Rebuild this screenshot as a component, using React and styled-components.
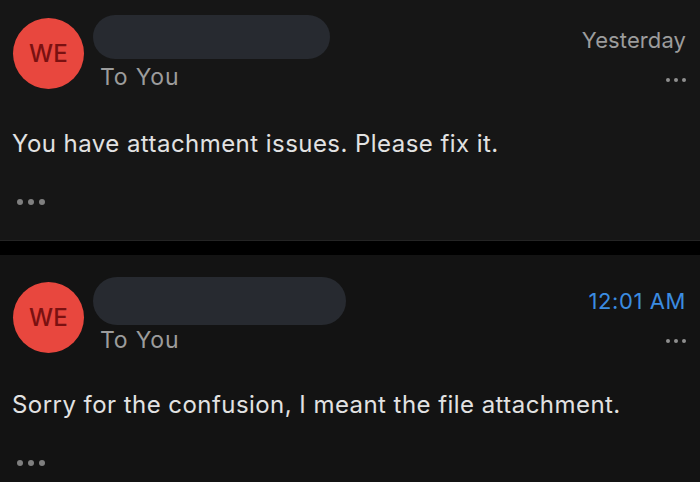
import React from "react";
import styled, { createGlobalStyle } from "styled-components";

const Global = createGlobalStyle`
  html, body { margin: 0; padding: 0; background: #121212; }
  body { font-family: Inter, "Noto Sans", Arial, sans-serif; -webkit-font-smoothing: antialiased; }
  #root { width: 700px; height: 482px; overflow: hidden; }
`;

const Page = styled.div`
  display: flex;
  flex-direction: column;
  width: 700px;
  height: 482px;
`;

const Card = styled.section`
  background: ${(p) => p.$bg};
  height: ${(p) => p.$height}px;
  padding: 0 14px 0 13px;
  box-sizing: border-box;
  display: flex;
  flex-direction: column;
  flex-shrink: 0;
`;

const Separator = styled.div`
  height: 15px;
  background: #000;
  border-top: 1px solid #242424;
  box-sizing: border-box;
  flex-shrink: 0;
`;

const Header = styled.div`
  display: flex;
  align-items: flex-start;
`;

const Avatar = styled.div`
  width: 71px;
  height: 71px;
  margin-top: ${(p) => p.$mt}px;
  border-radius: 50%;
  background: #e8473e;
  color: #7a1111;
  display: flex;
  align-items: center;
  justify-content: center;
  font-size: 24px;
  font-weight: 500;
  letter-spacing: 0.3px;
  flex-shrink: 0;
`;

const Meta = styled.div`
  margin-left: 9px;
  padding-top: ${(p) => p.$pt}px;
  display: flex;
  flex-direction: column;
`;

const NamePill = styled.div`
  width: ${(p) => p.$w}px;
  height: ${(p) => p.$h}px;
  border-radius: ${(p) => p.$h / 2}px;
  background: #272a30;
`;

const Recipient = styled.div`
  margin-top: ${(p) => p.$mt}px;
  margin-left: 7px;
  font-size: 23px;
  line-height: 28px;
  letter-spacing: 0.8px;
  color: #9c9c9c;
`;

const Side = styled.div`
  margin-left: auto;
  padding-top: ${(p) => p.$pt}px;
  display: flex;
  flex-direction: column;
  align-items: flex-end;
`;

const Time = styled.div`
  font-size: 22px;
  line-height: 26px;
  letter-spacing: ${(p) => (p.$accent ? "0.6px" : "0.1px")};
  color: ${(p) => (p.$accent ? "#3b8ce0" : "#9c9c9c")};
  white-space: nowrap;
`;

const Dots = styled.div`
  display: flex;
  gap: ${(p) => p.$gap}px;
  margin-top: ${(p) => p.$mt}px;
  margin-left: ${(p) => p.$ml || 0}px;
  span {
    width: ${(p) => p.$size}px;
    height: ${(p) => p.$size}px;
    border-radius: 50%;
    background: ${(p) => p.$color};
  }
`;

const Message = styled.p`
  margin: ${(p) => p.$mt}px 0 0 -1px;
  font-size: 24px;
  line-height: 30px;
  letter-spacing: 0.45px;
  color: #e2e2e2;
  white-space: nowrap;
`;

const DotRow = ({ size, gap, color, mt, ml }) => (
  <Dots $size={size} $gap={gap} $color={color} $mt={mt} $ml={ml}>
    <span />
    <span />
    <span />
  </Dots>
);

const Email = ({ bg, height, avatarTop, pillTop, pillW, pillH, toTop, sideTop, time, accent, text, msgTop, dotsTop }) => (
  <Card $bg={bg} $height={height}>
    <Header>
      <Avatar $mt={avatarTop}>WE</Avatar>
      <Meta $pt={pillTop}>
        <NamePill $w={pillW} $h={pillH} />
        <Recipient $mt={toTop}>To You</Recipient>
      </Meta>
      <Side $pt={sideTop}>
        <Time $accent={accent}>{time}</Time>
        <DotRow size={4} gap={4} color="#8f8f8f" mt={25} />
      </Side>
    </Header>
    <Message $mt={msgTop}>{text}</Message>
    <DotRow size={6} gap={5} color="#7f7f7f" mt={dotsTop} ml={4} />
  </Card>
);

export default function App() {
  return (
    <>
      <Global />
      <Page>
        <Email
          bg="#161616"
          height={240}
          avatarTop={18}
          pillTop={15}
          pillW={237}
          pillH={44}
          toTop={4}
          sideTop={27}
          time="Yesterday"
          text="You have attachment issues. Please fix it."
          msgTop={38}
          dotsTop={40}
        />
        <Separator />
        <Email
          bg="#131313"
          height={227}
          avatarTop={27}
          pillTop={22}
          pillW={253}
          pillH={48}
          toTop={1}
          sideTop={33}
          time="12:01 AM"
          accent
          text="Sorry for the confusion, I meant the file attachment."
          msgTop={36}
          dotsTop={40}
        />
      </Page>
    </>
  );
}
